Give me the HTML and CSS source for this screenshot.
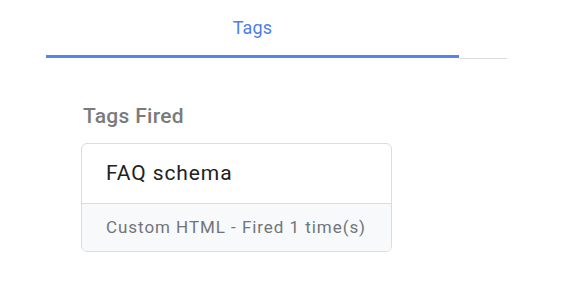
FILE: index.html
```html
<!DOCTYPE html>
<html lang="en">

<head>
    <meta charset="UTF-8">
    <meta name="viewport" content="width=device-width, initial-scale=1.0">
    <title>Tags</title>
    <link rel="stylesheet" href="styles.css">
</head>

<body>
    <div class="container">
        <div class="tab-bar">
            <div class="tab active">Tags</div>
            <div class="tab-rest"></div>
        </div>
        <div class="section">
            <h2 class="section-title">Tags Fired</h2>
            <div class="tag-card">
                <div class="tag-name">FAQ schema</div>
                <div class="tag-info">Custom HTML - Fired 1 time(s)</div>
            </div>
        </div>
    </div>
</body>

</html>
```

FILE: styles.css
```css
body {
    font-family: Roboto, Arial, sans-serif;
    margin: 0;
    padding: 0;
    background-color: #ffffff;
}

.container {
    padding-left: 46px;
    width: 461px;
}

.tab-bar {
    display: flex;
    height: 59px;
}

.tab {
    width: 413px;
    box-sizing: border-box;
    height: 58px;
    padding-top: 17px;
    text-align: center;
    font-size: 18px;
    line-height: 21px;
    letter-spacing: 0.2px;
}

.tab.active {
    color: #4a80e8;
    border-bottom: 3px solid #5286e8;
}

.tab-rest {
    flex: 1;
    border-bottom: 1px solid #dadce0;
}

.section {
    padding-left: 35px;
}

.section-title {
    font-size: 21px;
    font-weight: 500;
    line-height: 24px;
    letter-spacing: 0.3px;
    color: #7a7a7a;
    margin: 0;
    padding-top: 45px;
    padding-left: 2px;
}

.tag-card {
    margin-top: 15px;
    width: 309px;
    border: 1px solid #dadce0;
    border-radius: 6px;
    overflow: hidden;
}

.tag-name {
    font-size: 21px;
    line-height: 25px;
    letter-spacing: 0.9px;
    color: #202124;
    padding: 17px 24px 17px;
    border-bottom: 1px solid #dadce0;
}

.tag-info {
    font-size: 17px;
    line-height: 20px;
    letter-spacing: 0.95px;
    color: #70757a;
    background-color: #f8f9fa;
    padding: 13px 24px 14px;
}
```
